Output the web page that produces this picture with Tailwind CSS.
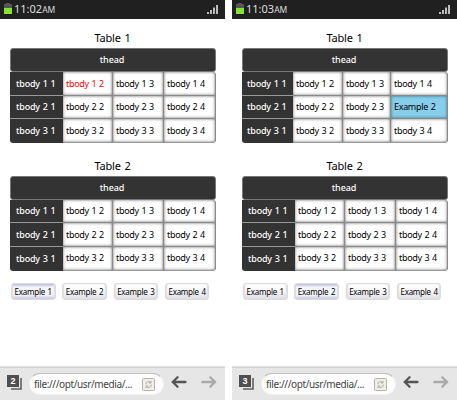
<!DOCTYPE html>
<html lang="en">
<head>
<meta charset="utf-8">
<title>Table examples</title>
<script src="https://cdn.jsdelivr.net/npm/@tailwindcss/browser@4"></script>
</head>
<body class="w-[457px] h-[400px] overflow-hidden bg-white font-['Noto_Sans','Open_Sans',sans-serif] text-black">
<main id="app" class="flex gap-[7px] w-[457px] h-[400px] bg-white"></main>
<script>
const wide = ['w-[53px]', 'w-[50px]', 'w-[51px]', 'w-[52px]'];
const narrow = ['w-[51px]', 'w-[50px]', 'w-[48px]', 'w-[57px]'];

function cell(r, c, widths, opt) {
  const hit = opt.active && opt.active[0] === r && opt.active[1] === c;
  const red = opt.red && opt.red[0] === r && opt.red[1] === c;
  const corner = r === 3 && c === 1 ? 'rounded-bl-[3px]' : c === 4 && r === 1 ? 'rounded-tr-[3px]' : c === 4 && r === 3 ? 'rounded-br-[3px]' : '';
  const edge = r < 3 ? 'border-b' : '';
  if (c === 1)
    return `<div class="${widths[0]} h-full flex items-center ${opt.narrow ? 'pl-[5px]' : 'pl-[6px]'} bg-[#333] text-white font-medium tracking-[-0.2px] border-[#999] ${edge} ${corner}"><span>tbody ${r} 1</span></div>`;
  const bg = hit ? 'bg-[#87ceeb] shadow-[inset_0_0_3px_#367]' : 'bg-white shadow-[inset_0_0_3px_#666]';
  return `<div class="${widths[c - 1]} h-full flex items-center pl-[3px] ${bg} border-r border-[#8a8a8a] ${r < 3 ? 'border-b' : 'border-b border-b-[#999]'} ${corner}"><span class="${red ? 'text-[#ff0000]' : 'text-black'}">${hit ? 'Example 2' : 'tbody ' + r + ' ' + c}</span></div>`;
}

function table(n, opt) {
  const widths = opt.narrow ? narrow : wide;
  const rows = [1, 2, 3].map(r => `<div class="flex h-[23.7px]">${[1, 2, 3, 4].map(c => cell(r, c, widths, opt)).join('')}</div>`).join('');
  return `<section class="w-[206px] h-[127.5px] shrink-0 whitespace-nowrap">
    <h2 class="h-[20px] leading-[20px] pr-[1px] text-center text-[11px] tracking-[-0.2px] [word-spacing:1px]">Table ${n}</h2>
    <div class="h-[24px] pr-[2px] rounded-[3px] bg-[#333] border border-[#777] flex items-center justify-center text-white text-[9px] font-medium tracking-[-0.1px]">thead</div>
    <div class="text-[9px] tracking-[-0.32px] [word-spacing:0.7px]">${rows}</div>
  </section>`;
}

function button(n, focused) {
  const look = focused
    ? 'bg-[linear-gradient(#b4b4e0,#f4f4fc_20%,#f4f4f8_75%,#c4c4e2)]'
    : 'bg-linear-to-b from-white via-[#f7f7f9] via-50% to-[#dcdee3]';
  return `<button class="w-[44.5px] h-[17px] rounded-[3px] border border-[#dcdcdf] shadow-[inset_1px_0_1px_#ddd,inset_-1px_0_1px_#ddd] ${look} text-[8px] leading-[14px] tracking-[-0.25px] [word-spacing:0.8px] whitespace-nowrap text-center">Example ${n}</button>`;
}

function phone(p) {
  return `<div class="w-[225px] h-[400px] flex flex-col overflow-hidden">
    <header class="h-[19px] shrink-0 bg-[#202020] flex items-center pl-[4px] pr-[7px] pb-[1px] text-[#dedede]">
      <svg class="w-[8px] h-[12px]" viewBox="0 0 8 12"><path d="M2 0h4v1h2v4H0V1h2z" fill="#555"/><path d="M0 5h8v6H0z" fill="#85e52d"/></svg>
      <span class="ml-[2px] text-[11px] leading-[18px]">${p.time}<span class="text-[8.5px]">AM</span></span>
      <svg class="ml-auto w-[11px] h-[10px]" viewBox="0 0 11 10" fill="#bdbdbd"><path d="M0 8h2v2H0zM3 6h2v4H3zM6 3.5h2V10H6zM9 1h2v9H9z"/></svg>
    </header>
    <div class="h-[348px] shrink-0 pl-[10px] pt-[9px]">
      ${table(1, p.first)}
      ${table(2, {})}
      <div class="flex gap-[6.8px] pl-[1px]">${[1, 2, 3, 4].map(n => button(n, n === p.focus)).join('')}</div>
    </div>
    <footer class="h-[33px] shrink-0 bg-[#e6e6e6] border-t border-[#d0d0d0] shadow-[0_-1px_1px_#e4e4e4] flex items-center pl-[7px]">
      <svg class="w-[16px] h-[16px] shrink-0 -mt-[3px]" viewBox="0 0 16 16"><path d="M0 0h12v12H0z" fill="#505050"/><path d="M14 3v11H4" fill="none" stroke="#606060" stroke-width="1.6"/><text x="6" y="9.2" text-anchor="middle" font-family="Liberation Sans" font-weight="bold" font-size="9" fill="white">${p.tabs}</text></svg>
      <div class="ml-[6px] w-[135px] h-[22px] rounded-full bg-[#fdfdfd] border border-[#f2f2f2] border-t-[#bfbfbf] flex items-center pl-[4px] pr-[8px] text-[10px] text-[#444] tracking-[-0.38px]">
        <span class="whitespace-nowrap">file:///opt/usr/media/...</span>
        <svg class="ml-auto w-[13px] h-[13px] shrink-0" viewBox="0 0 13 13"><rect x=".5" y=".5" width="12" height="12" rx="1" fill="#eeede6" stroke="#b5b3aa"/><path d="M3.8 6.3a2.8 2.8 0 0 1 4.8-1.8M9.3 6.7a2.8 2.8 0 0 1-4.8 1.9M9 3v2H7M4 10V8h2" fill="none" stroke="#aaa" stroke-width="1"/></svg>
      </div>
      <svg class="ml-[7px] w-[16px] h-[12px] shrink-0 -mt-[4px]" viewBox="0 0 16 12" fill="none" stroke="#555" stroke-width="2.3" stroke-linecap="round"><path d="M14.5 6H2M6.5 1.3 1.8 6l4.7 4.7"/></svg>
      <svg class="ml-[14px] w-[16px] h-[12px] shrink-0 -mt-[4px]" viewBox="0 0 16 12" fill="none" stroke="#aaa" stroke-width="2.3" stroke-linecap="round"><path d="M1.2 6h12.5M9.3 1.3 14 6l-4.7 4.7"/></svg>
    </footer>
  </div>`;
}

document.getElementById('app').innerHTML =
  phone({ time: '11:02', tabs: 2, focus: 1, first: { red: [1, 2] } }) +
  phone({ time: '11:03', tabs: 3, focus: 2, first: { narrow: true, active: [2, 4] } });
</script>
</body>
</html>
